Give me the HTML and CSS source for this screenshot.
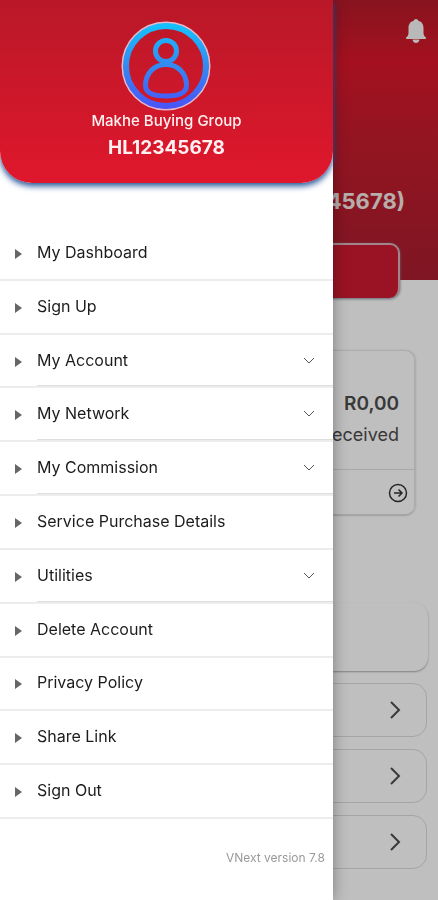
FILE: index.html
```html
<!DOCTYPE html>
<html lang="en">
<head>
<meta charset="utf-8">
<meta name="viewport" content="width=device-width, initial-scale=1">
<title>Makhe Buying Group</title>
<link rel="stylesheet" href="styles.css">
</head>
<body>
<main class="page">
  <section class="hero">
    <button class="bell" aria-label="Notifications">
      <svg viewBox="0 0 22 24" width="22" height="24"><path fill="currentColor" d="M11 0c1.300 0 2 .8 2.300 1.700C17 2.700 18.500 5.500 18.500 9v5c0 2 .8 3.200 2.200 4.200.8.600.5 1.800-.5 1.800H1.800c-1 0-1.300-1.200-.5-1.800C2.700 17.200 3.500 16 3.500 14V9c0-3.500 1.500-6.300 5.200-7.300C9 .8 9.700 0 11 0zM7.500 20.500h7c-.3 2-1.600 3.500-3.500 3.500s-3.200-1.500-3.500-3.500z"/></svg>
    </button>
    <h1 class="member">(HL12345678)</h1>
    <div class="banner"></div>
  </section>
  <section class="card">
    <div class="card-body">
      <strong class="amount">R0,00</strong>
      <span class="caption">Received</span>
    </div>
    <a class="card-foot" href="#" aria-label="View received">
      <svg viewBox="0 0 20 20" width="20" height="20" fill="none" stroke="currentColor" stroke-width="1.500"><circle cx="10" cy="10" r="8.500"/><path d="M6 10h8M10.500 6.500L14 10l-3.500 3.500"/></svg>
    </a>
  </section>
  <section class="links">
    <div class="panel"></div>
    <a class="link" href="#" aria-label="Open first"><svg viewBox="0 0 12 20" width="12" height="20"><path d="M2 2l8 8-8 8"/></svg></a>
    <a class="link" href="#" aria-label="Open second"><svg viewBox="0 0 12 20" width="12" height="20"><path d="M2 2l8 8-8 8"/></svg></a>
    <a class="link" href="#" aria-label="Open third"><svg viewBox="0 0 12 20" width="12" height="20"><path d="M2 2l8 8-8 8"/></svg></a>
  </section>
</main>
<div class="scrim"></div>
<aside class="drawer">
  <header class="profile">
    <svg class="avatar" viewBox="0 0 90 90" width="90" height="90" fill="none">
      <defs><linearGradient id="blue" gradientUnits="userSpaceOnUse" x1="0" y1="0" x2="0" y2="90"><stop offset="0" stop-color="#12c6ff"/><stop offset=".5" stop-color="#3489f0"/><stop offset="1" stop-color="#4b50fa"/></linearGradient></defs>
      <circle cx="45" cy="45" r="43.500" stroke="#e5b9cb" stroke-width="2"/>
      <g stroke="url(#blue)" stroke-width="5"><circle cx="45" cy="45" r="40" stroke-width="6"/><circle cx="45" cy="30" r="10.500"/><path d="M45 43.500c-12 0-20.500 9-20.500 21 0 8 9.500 10.500 20.500 10.500s20.500-2.500 20.500-10.500c0-12-8.500-21-20.500-21z"/></g>
    </svg>
    <div class="name">Makhe Buying Group</div>
    <div class="code">HL12345678</div>
  </header>
  <nav class="menu">
    <a class="item" href="#">My Dashboard</a>
    <a class="item" href="#">Sign Up</a>
    <button class="item group">My Account<svg class="chevron" viewBox="0 0 12 8" width="12" height="8"><path d="M1 1l5 5 5-5"/></svg></button>
    <button class="item group">My Network<svg class="chevron" viewBox="0 0 12 8" width="12" height="8"><path d="M1 1l5 5 5-5"/></svg></button>
    <button class="item group">My Commission<svg class="chevron" viewBox="0 0 12 8" width="12" height="8"><path d="M1 1l5 5 5-5"/></svg></button>
    <a class="item" href="#">Service Purchase Details</a>
    <button class="item group">Utilities<svg class="chevron" viewBox="0 0 12 8" width="12" height="8"><path d="M1 1l5 5 5-5"/></svg></button>
    <a class="item" href="#">Delete Account</a>
    <a class="item" href="#">Privacy Policy</a>
    <a class="item" href="#">Share Link</a>
    <a class="item" href="#">Sign Out</a>
  </nav>
  <footer class="version">VNext version 7.8</footer>
</aside>
</body>
</html>
```
FILE: styles.css
```css
* { box-sizing: border-box; }
body {
  margin: 0;
  background: #fff;
  color: #4c4c4c;
  font-family: Inter, "Liberation Sans", sans-serif;
}
button { border: 0; background: none; padding: 0; font: inherit; color: inherit; }
a { color: inherit; text-decoration: none; }
svg { display: block; flex: none; }

.page { min-height: 100vh; overflow: hidden; }
.hero {
  display: flex;
  flex-direction: column;
  align-items: flex-end;
  padding: 19px 11px 0;
  height: 280px;
  background: linear-gradient(#b51b2a, #dc162a 22%, #c81b2d 45%, #a91e2f);
}
.bell { color: #f7f7f7; }
.member {
  margin: 144px 22px 0 0;
  font-size: 22px;
  line-height: 28px;
  font-weight: 700;
  color: #f4e8e6;
}
.banner {
  flex: none;
  width: 88%;
  height: 55px;
  margin: 28px 27px 0 0;
  background: #cc1a30;
  border: 1px solid #d8b0b8;
  border-width: 2px 2px 0 0;
  border-radius: 10px;
  box-shadow: 0 1px 3px #8089a0;
}
.card {
  margin: 70px 23px 0;
  border: 1px solid #e6e6e6;
  border-bottom: 2px solid #dcdcdc;
  border-radius: 10px;
  box-shadow: 1px 0 2px #e0e0e0;
}
.card-body {
  display: flex;
  flex-direction: column;
  align-items: flex-end;
  padding: 37px 15px 19px;
}
.amount { font-size: 19px; line-height: 32px; font-weight: 600; }
.caption { font-size: 18px; line-height: 30px; }
.card-foot {
  display: flex;
  justify-content: flex-end;
  padding: 13px 6px 11px;
  border-top: 1px solid #e0e0e0;
  color: #333;
}
.links {
  display: flex;
  flex-direction: column;
  gap: 12px;
  padding: 87px 11px 32px;
}
.panel { height: 68px; margin-right: -1px; border-radius: 14px; box-shadow: 0 1px 2px #aaa; }
.link {
  display: flex;
  justify-content: flex-end;
  align-items: center;
  height: 54px;
  padding-right: 25px;
  border: 1px solid #dcdcdc;
  border-radius: 14px;
}
.link svg { fill: none; stroke: currentColor; stroke-width: 2; }

.scrim { position: fixed; inset: 0; background: rgba(0, 0, 0, .25); }

.drawer {
  position: absolute;
  top: 0;
  left: 0;
  display: flex;
  flex-direction: column;
  width: 76%;
  min-height: 100vh;
  background: #fff;
  color: #1c1c1c;
  box-shadow: 0 0 14px rgba(0, 0, 0, .35);
}
.profile {
  display: flex;
  flex-direction: column;
  align-items: center;
  padding: 21px 16px 22px;
  background: linear-gradient(#b91828, #e0172c);
  border-radius: 0 0 32px 32px;
  box-shadow: 0 3px 6px #1d5096;
  color: #fff1f1;
  font-weight: 500;
}
.name { font-size: 15px; line-height: 20px; }
.code { margin-top: 3px; font-size: 19px; line-height: 27px; font-weight: 700; }
.menu { flex: 1; display: flex; flex-direction: column; margin-top: 44px; }
.item {
  flex: 1;
  display: flex;
  align-items: center;
  min-height: 44px;
  padding: 0 18px 2px 0;
  border-bottom: 2px solid #ededed;
  font-size: 16px;
  line-height: 24px;
  text-align: left;
}
.item::before {
  content: "";
  margin: 4px 15px 0;
  border: 5px solid transparent;
  border-left: 7px solid #666;
  border-right: 0;
}
.group { background: linear-gradient(#dedede, #dedede) 37px 100% / 100% 1px no-repeat; }
.chevron { margin: 2px 0 0 auto; fill: none; stroke: #555; stroke-width: 1; }
.version {
  padding: 29px 8px 32px;
  font-size: 12px;
  line-height: 20px;
  text-align: right;
  color: #999;
}
```
